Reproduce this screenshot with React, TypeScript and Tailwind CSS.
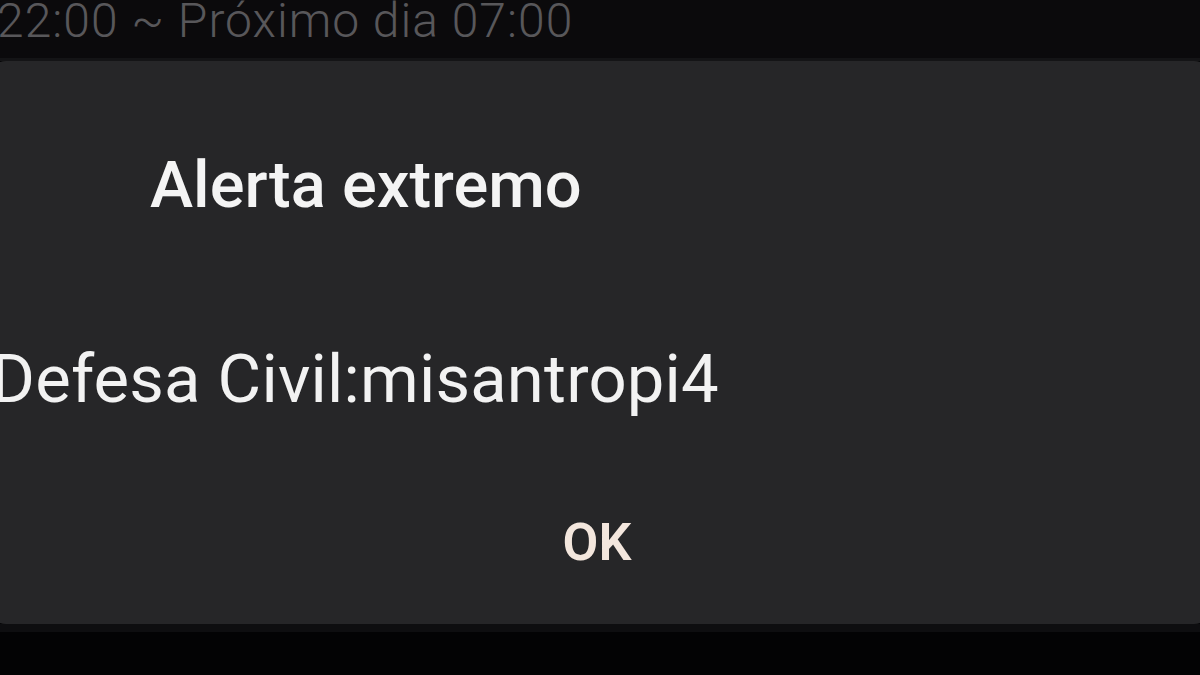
export default function App() {
  return (
    <div
      className="w-[1200px] h-[675px] overflow-hidden bg-[#030304] flex flex-col"
      style={{ fontFamily: "Roboto, 'Noto Sans', sans-serif" }}
    >
      <div className="h-[58px] shrink-0 bg-[#0b0a0c] flex items-start overflow-hidden">
        <span className="text-[48px] leading-none mt-[-3px] ml-[-3px] text-[#58575a] whitespace-nowrap tracking-[1px] font-light">
          22:00 ~ Próximo dia 07:00
        </span>
      </div>
      <div className="h-[3px] shrink-0 bg-[#141416]" />
      <div className="h-[563px] shrink-0 mx-[-12px] rounded-[18px] bg-[#262628] flex flex-col px-[12px]">
        <div className="mt-[92px] ml-[150px] text-[65px] leading-none font-medium text-[#f4f4f4] whitespace-nowrap">
          Alerta extremo
        </div>
        <div className="mt-[128px] ml-[-9px] text-[67px] leading-none text-[#f2f2f2] whitespace-nowrap tracking-[0.2px]">
          Defesa Civil:misantropi4
        </div>
        <div className="mt-[104px] flex justify-center">
          <span className="ml-[-6px] text-[52px] leading-none font-semibold text-[#f3e6dd]">OK</span>
        </div>
      </div>
      <div className="h-[8px] shrink-0 bg-[#0e0e10]" />
    </div>
  );
}
